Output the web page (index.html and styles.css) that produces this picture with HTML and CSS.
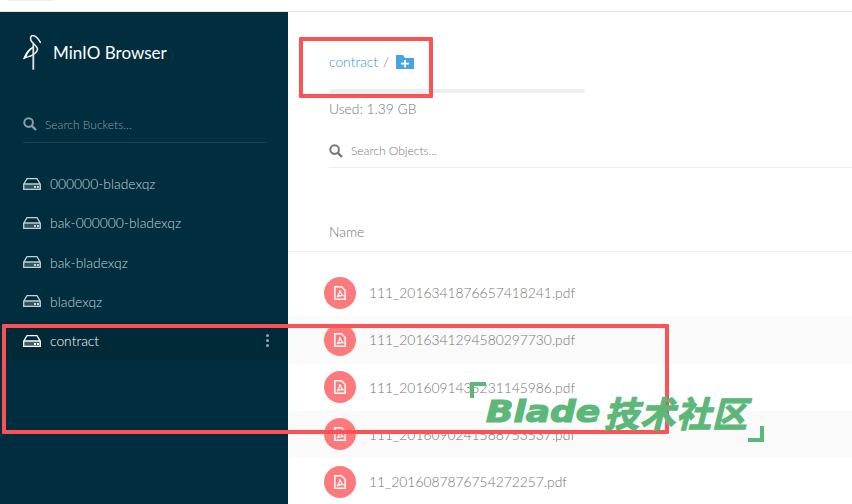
FILE: index.html

```html
<!DOCTYPE html>
<html lang="en">
<head>
  <meta charset="UTF-8" />
  <title>MinIO Browser</title>
  <link rel="stylesheet" href="styles.css">
</head>
<body>
  <svg width="0" height="0" class="defs">
    <symbol id="search" viewBox="0 0 14 14">
      <circle cx="5.6" cy="5.6" r="4.3" fill="none" stroke="currentColor" stroke-width="2"/>
      <path d="M8.8 8.8 13 13" stroke="currentColor" stroke-width="2.4" fill="none"/>
    </symbol>
    <symbol id="drive" viewBox="0 0 18 12">
      <path d="M4 .7h10l3.300 5.500v5.100H.7V6.200z M1 6h16" fill="none" stroke="currentColor" stroke-width="1.300"/>
      <path d="M1 6.500h16v5H1z" fill="currentColor" fill-opacity=".25"/>
      <path d="M11 8h2v2h-2z M14 8h2v2h-2z" fill="currentColor"/>
    </symbol>
    <symbol id="pdf" viewBox="0 0 12 14">
      <path d="M.8.8h6.700l3.700 3.700v8.700H.8z" fill="none" stroke="#fff" stroke-width="1.500"/>
      <path d="M6 4c0 2.500-1 4.500-3 7 2-1 4-1.500 6-1.300C7.500 8.500 6.500 6.500 6 4z" fill="none" stroke="#fff" stroke-width="1.100"/>
    </symbol>
  </svg>

  <div class="topbar"><span class="top-tab"></span></div>

  <div class="app">
    <!-- Sidebar -->
    <aside class="sidebar">
      <div class="logo">
        <svg class="bird" viewBox="0 0 18 36" width="18" height="36">
          <path d="M17.700 8C15.500 4 12.500.6 9.800.6 7.600.6 7 3.500 8.200 5.800c1.500 2.800 6.300 5 6.300 8.400 0 3-4 5.500-8 7.400" fill="none" stroke="#fff" stroke-width="1.500"/>
          <path d="M.3 23.700C2 18.500 5.500 13.500 10 11.500l1.200.8C7 15 4.500 18.500 3.800 21.400z" fill="#fff"/>
          <path d="M.3 23.700 7 21" stroke="#fff" stroke-width="1.200"/>
          <path d="M10.300 9V34.700" fill="none" stroke="#dfe6e8" stroke-width="1.800"/>
        </svg>
        <span class="logo-text">MinIO Browser</span>
      </div>

      <div class="bucket-search">
        <svg class="search-icon"><use href="#search"/></svg>
        <span>Search Buckets...</span>
      </div>

      <ul class="buckets">
        <li><svg class="drive"><use href="#drive"/></svg>000000-bladexqz</li>
        <li><svg class="drive"><use href="#drive"/></svg>bak-000000-bladexqz</li>
        <li><svg class="drive"><use href="#drive"/></svg>bak-bladexqz</li>
        <li><svg class="drive"><use href="#drive"/></svg>bladexqz</li>
        <li class="active"><svg class="drive"><use href="#drive"/></svg>contract<span class="dots"><i></i><i></i><i></i></span></li>
      </ul>
    </aside>

    <!-- Objects -->
    <main class="content">
      <div class="crumb">
        <a class="crumb-link">contract</a> <span class="crumb-sep">/</span>
        <svg class="add-folder" viewBox="0 0 18 14" width="18" height="14">
          <path d="M0 0h7l2 3h9v11H0z" fill="#46a5e0"/>
          <path d="M9 5v7.500M5 8.700h8" stroke="#fff" stroke-width="1.800"/>
        </svg>
      </div>
      <div class="usage"></div>
      <div class="used">Used: 1.39 GB</div>
      <div class="object-search">
        <svg class="search-icon"><use href="#search"/></svg>
        <span>Search Objects...</span>
      </div>
      <div class="list-head">Name</div>
      <ul class="objects">
        <li><span class="file-icon"><svg width="12" height="14"><use href="#pdf"/></svg></span>111_2016341876657418241.pdf</li>
        <li><span class="file-icon"><svg width="12" height="14"><use href="#pdf"/></svg></span>111_2016341294580297730.pdf</li>
        <li><span class="file-icon"><svg width="12" height="14"><use href="#pdf"/></svg></span>111_2016091435231145986.pdf</li>
        <li><span class="file-icon"><svg width="12" height="14"><use href="#pdf"/></svg></span>111_2016090241588753537.pdf</li>
        <li><span class="file-icon"><svg width="12" height="14"><use href="#pdf"/></svg></span>11_2016087876754272257.pdf</li>
      </ul>
    </main>
  </div>

  <!-- annotations on top of the screenshot -->
  <div class="mark mark-crumb"></div>
  <div class="mark mark-row"></div>
  <div class="stamp">
    <div class="stamp-text"><span class="stamp-en">Blade</span><span class="stamp-zh">技术社区</span></div>
    <span class="corner corner-tl"></span>
    <span class="corner corner-br"></span>
  </div>
</body>
</html>
```

FILE: styles.css

```css
* { margin: 0; padding: 0; box-sizing: border-box; }
html, body { height: 504px; overflow: hidden; }
body { background: #fff; color: #767676; font-family: Lato, "Open Sans", sans-serif; font-size: 13.850px; font-weight: 300; position: relative; }
ul { list-style: none; }
.defs { position: absolute; }

.topbar { height: 12px; border-bottom: 1px solid #e6e6e6; padding-left: 8px; }
.top-tab { display: block; width: 44px; height: 1px; background: #eee; }

.app { display: flex; height: 492px; }

/* sidebar */
.sidebar { width: 288px; flex: none; background: #002e3e; color: #c3d0d5; }
.logo { display: flex; align-items: center; height: 36px; margin: 23px 0 0 23px; }
.bird { flex: none; }
.logo-text { margin: -2px 0 0 12px; color: #fff; font-size: 17px; font-weight: 400; }
.bucket-search { display: flex; align-items: center; height: 36px; margin: 36px 22px 0 23px; border-bottom: 1px solid #1c4352; padding-bottom: 1px; color: #86a0a9; font-size: 12px; }
.search-icon { width: 14px; height: 14px; flex: none; margin-right: 8px; }
.buckets { margin-top: 21px; }
.buckets li { display: flex; align-items: center; height: 39.250px; padding-left: 23px; position: relative; }
.buckets li.active { background: #002a38; color: #fff; }
.drive { width: 18px; height: 12px; margin-right: 9px; flex: none; }
.dots { position: absolute; right: 19px; top: 13px; display: flex; flex-direction: column; gap: 2px; }
.dots i { display: block; width: 3px; height: 3px; background: #93a6ad; border-radius: 50%; }

/* objects */
.content { flex: 1; min-width: 0; }
.crumb { display: flex; align-items: center; height: 20px; margin: 39px 0 0 41px; }
.crumb-link { color: #2f98dc; }
.crumb-sep { margin: 0 6px 0 5px; }
.add-folder { flex: none; margin: 2px 0 0 1px; }
.usage { width: 256px; height: 4px; margin: 18px 0 0 41px; background: #eee; border-radius: 2px; }
.used { margin: 8px 0 0 41px; line-height: 16px; }
.object-search { display: flex; align-items: center; height: 35px; margin: 16px 0 0 41px; padding-top: 1px; border-bottom: 1px solid #eee; font-size: 12px; }
.list-head { height: 84px; padding: 55px 0 0 41px; line-height: 18px; border-bottom: 1px solid #eee; }
.objects { margin-top: 17px; }
.objects li { display: flex; align-items: center; height: 47.250px; padding-left: 36px; }
.objects li:nth-child(even) { background: #fafafa; }
.file-icon { display: flex; align-items: center; justify-content: center; width: 32px; height: 32px; margin-right: 13px; border-radius: 50%; background: #fd7a7c; }

/* annotations */
.mark { position: absolute; border: 4px solid #fd5253; border-radius: 1px; }
.mark-crumb { left: 299px; top: 37px; width: 134px; height: 61px; }
.mark-row { left: 2px; top: 324px; width: 667px; height: 110px; }
.stamp { position: absolute; left: 470px; top: 382px; width: 294px; height: 60px; color: #5cb878; }
.stamp-text { position: absolute; left: 16px; top: 11px; display: flex; align-items: center; height: 36px; white-space: nowrap; }
.stamp-en { display: block; width: 118px; font-family: "DejaVu Sans", sans-serif; font-weight: 700; font-style: italic; font-size: 30px; transform: scaleX(1.2); transform-origin: left center; -webkit-text-stroke: 1.200px #5cb878; }
.stamp-zh { display: block; font-family: "Noto Sans CJK SC", sans-serif; font-weight: 700; font-style: italic; font-size: 35px; letter-spacing: 1px; -webkit-text-stroke: 1.200px #5cb878; }
.corner { position: absolute; width: 16px; height: 16px; border: 0 solid #5cb878; }
.corner-tl { left: 0; top: 0; border-width: 4px 0 0 4px; }
.corner-br { right: 0; bottom: 0; border-width: 0 4px 4px 0; }
```
